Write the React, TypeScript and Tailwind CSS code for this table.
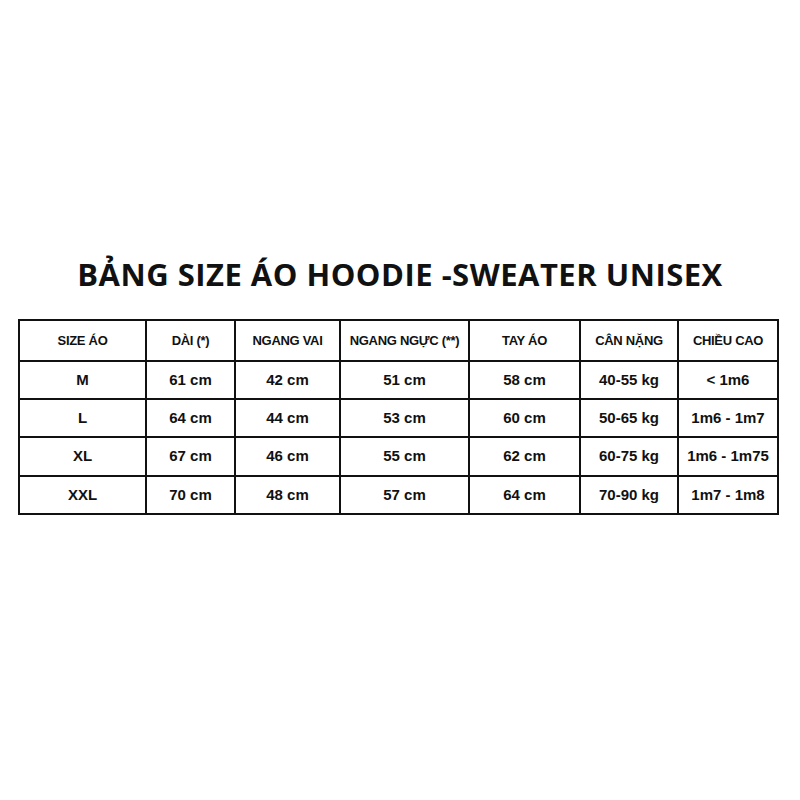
import React from "react";

const headers = ["SIZE ÁO", "DÀI (*)", "NGANG VAI", "NGANG NGỰC (**)", "TAY ÁO", "CÂN NẶNG", "CHIỀU CAO"];
const rows = [
  { h: "h-[38px]", c: ["M", "61 cm", "42 cm", "51 cm", "58 cm", "40-55 kg", "< 1m6"] },
  { h: "h-[38px]", c: ["L", "64 cm", "44 cm", "53 cm", "60 cm", "50-65 kg", "1m6 - 1m7"] },
  { h: "h-[39px]", c: ["XL", "67 cm", "46 cm", "55 cm", "62 cm", "60-75 kg", "1m6 - 1m75"] },
  { h: "h-[38px]", c: ["XXL", "70 cm", "48 cm", "57 cm", "64 cm", "70-90 kg", "1m7 - 1m8"] },
];
const widths = ["w-[127px]", "w-[89px]", "w-[105px]", "w-[129px]", "w-[111px]", "w-[98px]", "w-[100px]"];

export default function App() {
  return (
    <div className="w-[800px] h-[800px] bg-white flex flex-col items-center text-[#111]">
      <h1 className="mt-[254px] h-[40px] text-[31px] leading-[40px] font-bold tracking-[0.5px] font-['Open_Sans','Noto_Sans',sans-serif]">
        BẢNG SIZE ÁO HOODIE -SWEATER UNISEX
      </h1>
      <table className="mt-[25px] ml-[-3px] border-collapse border-2 border-[#111] table-fixed font-bold font-['Liberation_Sans',Arial,sans-serif]">
        <colgroup>
          {widths.map((w, i) => (
            <col key={i} className={w} />
          ))}
        </colgroup>
        <thead>
          <tr className="h-[41px]">
            {headers.map((h) => (
              <th key={h} className="border-2 border-[#111] p-0 text-center text-[13px] font-bold tracking-[-0.3px] whitespace-nowrap">
                {h}
              </th>
            ))}
          </tr>
        </thead>
        <tbody>
          {rows.map((r, ri) => (
            <tr key={ri} className={r.h}>
              {r.c.map((c, ci) => (
                <td key={ci} className="border-2 border-[#111] p-0 text-center text-[15px] whitespace-nowrap">
                  {c}
                </td>
              ))}
            </tr>
          ))}
        </tbody>
      </table>
    </div>
  );
}
